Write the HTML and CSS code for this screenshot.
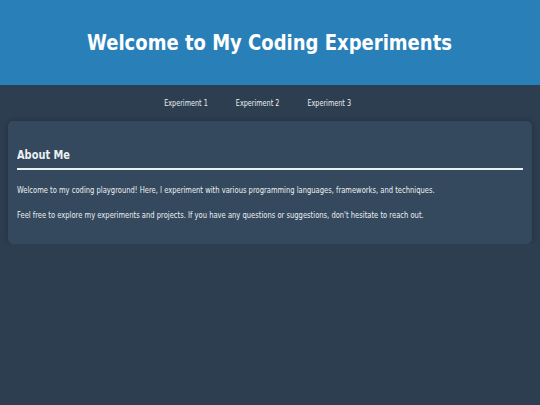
FILE: index.html
```html
<!DOCTYPE html>
<html lang="en">

<head>
    <meta charset="UTF-8">
    <meta name="viewport" content="width=device-width, initial-scale=1.0">
    <title>My Coding Experiments</title>
    <link rel="stylesheet" href="styles.css">
</head>

<body>
    <header class="header">
        <h1 class="title">Welcome to My Coding Experiments</h1>
    </header>
    <nav class="nav">
        <a href="#">Experiment 1</a>
        <a href="#">Experiment 2</a>
        <a href="#">Experiment 3</a>
    </nav>
    <main class="contain">
        <section class="card">
            <h2 class="card-title"><span>About Me</span></h2>
            <p>Welcome to my coding playground! Here, I experiment with various programming languages, frameworks, and techniques.</p>
            <p>Feel free to explore my experiments and projects. If you have any questions or suggestions, don't hesitate to reach out.</p>
        </section>
    </main>
</body>

</html>
```

FILE: styles.css
```css
* {
    margin: 0;
    padding: 0;
    box-sizing: border-box;
}

body {
    font-family: "DejaVu Sans Condensed", "DejaVu Sans", sans-serif;
    font-size: 9px;
    color: #ecf0f1;
    background-color: #2c3e50;
}

.header {
    height: 85px;
    display: flex;
    align-items: center;
    justify-content: center;
    background-color: #2980b9;
}

/* the text runs narrower than DejaVu, hence the scaleX */
.header .title {
    font-size: 22px;
    font-weight: bold;
    color: #fff;
    white-space: nowrap;
    transform: scaleX(0.91);
}

.nav {
    display: flex;
    justify-content: center;
    gap: 35px;
    height: 36px;
    padding-right: 31px;
    align-items: center;
    transform: scaleX(0.8);
}

.nav a {
    color: #ecf0f1;
    text-decoration: none;
}

.contain {
    padding: 0 8px;
}

.card {
    padding: 26px 9px 23px;
    background-color: #34495e;
    border-radius: 5px;
    box-shadow: 0 0 6px rgba(0, 0, 0, 0.25);
}

.card-title {
    font-size: 13px;
    padding-bottom: 6px;
    margin-bottom: 15px;
    border-bottom: 2px solid #ecf0f1;
}

.card-title span {
    display: inline-block;
    transform: scaleX(0.84);
    transform-origin: left center;
}

.card p {
    line-height: 11px;
    margin-bottom: 14px;
    white-space: nowrap;
    transform: scaleX(0.836);
    transform-origin: left center;
}

.card p:last-child {
    margin-bottom: 0;
}
```
